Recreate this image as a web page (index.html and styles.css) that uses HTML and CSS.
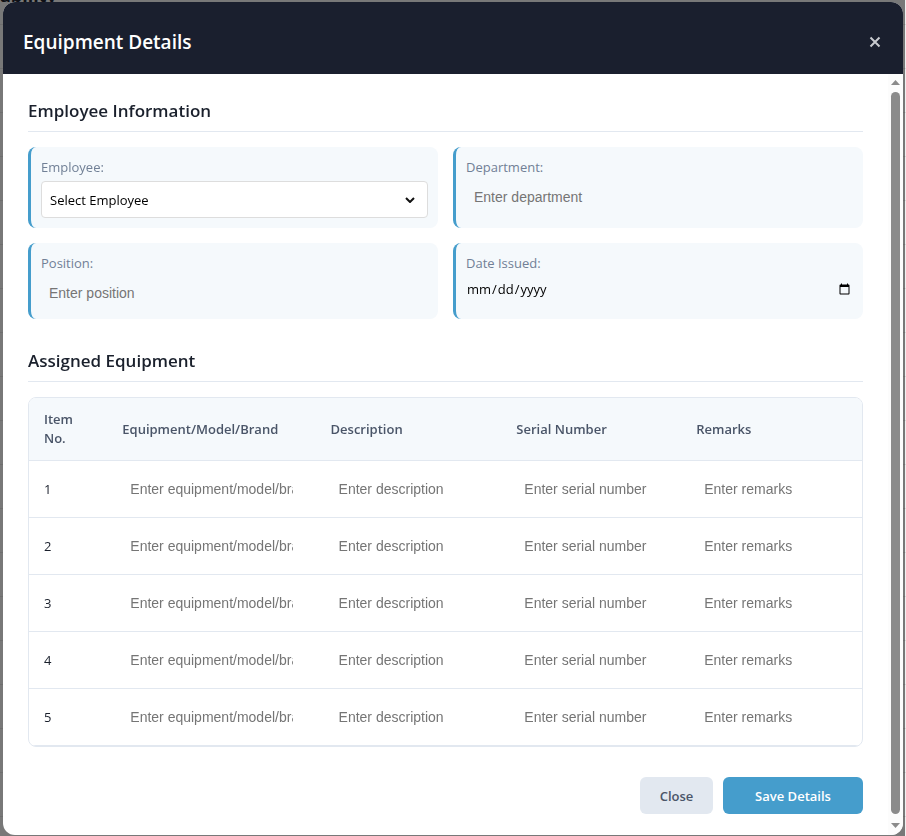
FILE: index.html
```html
<!DOCTYPE html>
<html lang="en">
<head>
<meta charset="utf-8">
<title>Equipment Details</title>
<link rel="stylesheet" href="styles.css">
</head>
<body>
<div class="page"><p class="page-title">ability</p></div>
<div class="overlay">
  <div class="modal" role="dialog" aria-labelledby="modal-title">
    <header class="modal-header">
      <h2 id="modal-title">Equipment Details</h2>
      <button class="close-icon" type="button" aria-label="Close">
        <svg width="12" height="12" viewBox="0 0 12 12"><path d="M1.5 1.5 10.5 10.5M10.5 1.5 1.5 10.5"/></svg>
      </button>
    </header>
    <div class="modal-main">
      <form class="modal-body">
        <section>
          <h3>Employee Information</h3>
          <div class="info-grid">
            <div class="info-item">
              <label for="employee">Employee:</label>
              <div class="select-wrap">
                <select id="employee"><option>Select Employee</option></select>
                <svg width="10" height="6" viewBox="0 0 10 6"><path d="M1 1 5 5 9 1"/></svg>
              </div>
            </div>
            <div class="info-item">
              <label for="department">Department:</label>
              <input class="field" id="department" type="text" placeholder="Enter department">
            </div>
            <div class="info-item">
              <label for="position">Position:</label>
              <input class="field" id="position" type="text" placeholder="Enter position">
            </div>
            <div class="info-item">
              <label for="issued">Date Issued:</label>
              <input class="date" id="issued" type="date">
            </div>
          </div>
        </section>
        <section>
          <h3>Assigned Equipment</h3>
          <div class="table-wrap">
            <table>
              <colgroup><col class="c-item"><col class="c-equipment"><col class="c-description"><col class="c-serial"><col></colgroup>
              <thead>
                <tr><th>Item No.</th><th>Equipment/Model/Brand</th><th>Description</th><th>Serial Number</th><th>Remarks</th></tr>
              </thead>
              <tbody>
                <tr><td>1</td><td><input class="field" type="text" aria-label="Equipment 1" placeholder="Enter equipment/model/brand"></td><td><input class="field" type="text" aria-label="Description 1" placeholder="Enter description"></td><td><input class="field" type="text" aria-label="Serial number 1" placeholder="Enter serial number"></td><td><input class="field" type="text" aria-label="Remarks 1" placeholder="Enter remarks"></td></tr>
                <tr><td>2</td><td><input class="field" type="text" aria-label="Equipment 2" placeholder="Enter equipment/model/brand"></td><td><input class="field" type="text" aria-label="Description 2" placeholder="Enter description"></td><td><input class="field" type="text" aria-label="Serial number 2" placeholder="Enter serial number"></td><td><input class="field" type="text" aria-label="Remarks 2" placeholder="Enter remarks"></td></tr>
                <tr><td>3</td><td><input class="field" type="text" aria-label="Equipment 3" placeholder="Enter equipment/model/brand"></td><td><input class="field" type="text" aria-label="Description 3" placeholder="Enter description"></td><td><input class="field" type="text" aria-label="Serial number 3" placeholder="Enter serial number"></td><td><input class="field" type="text" aria-label="Remarks 3" placeholder="Enter remarks"></td></tr>
                <tr><td>4</td><td><input class="field" type="text" aria-label="Equipment 4" placeholder="Enter equipment/model/brand"></td><td><input class="field" type="text" aria-label="Description 4" placeholder="Enter description"></td><td><input class="field" type="text" aria-label="Serial number 4" placeholder="Enter serial number"></td><td><input class="field" type="text" aria-label="Remarks 4" placeholder="Enter remarks"></td></tr>
                <tr><td>5</td><td><input class="field" type="text" aria-label="Equipment 5" placeholder="Enter equipment/model/brand"></td><td><input class="field" type="text" aria-label="Description 5" placeholder="Enter description"></td><td><input class="field" type="text" aria-label="Serial number 5" placeholder="Enter serial number"></td><td><input class="field" type="text" aria-label="Remarks 5" placeholder="Enter remarks"></td></tr>
              </tbody>
            </table>
          </div>
        </section>
        <div class="actions">
          <button class="btn btn-close" type="button">Close</button>
          <button class="btn btn-save" type="submit">Save Details</button>
        </div>
      </form>
      <div class="scrollbar" aria-hidden="true">
        <svg width="9" height="5" viewBox="0 0 9 5"><path d="M4.5 0 9 5H0z"/></svg>
        <div class="thumb"></div>
        <svg width="9" height="5" viewBox="0 0 9 5"><path d="M0 0H9L4.5 5z"/></svg>
      </div>
    </div>
  </div>
</div>
</body>
</html>
```
FILE: styles.css
```css
* { box-sizing: border-box; }

body {
  margin: 0;
  height: 100vh;
  overflow: hidden;
  font-family: "Segoe UI", "Open Sans", "Noto Sans", sans-serif;
  color: #1a202c;
  background: #fff;
}

.page {
  height: 100%;
  overflow: hidden;
  background: repeating-linear-gradient(#f0f0f0 0 24px, #dcdcdc 24px 25px, #f0f0f0 25px 44px);
}

.page-title {
  margin: -17px 0 0;
  font-size: 18px;
  line-height: 24px;
  font-weight: 700;
}

.overlay {
  position: fixed;
  inset: 0 1px 0 0;
  display: flex;
  padding: 2px 2px 1px 3px;
  background: rgba(0, 0, 0, 0.5);
}

.modal {
  flex: 1;
  min-width: 0;
  display: flex;
  flex-direction: column;
  overflow: hidden;
  border-radius: 12px;
  background: #fff;
}

.modal-header {
  display: flex;
  flex: none;
  align-items: center;
  justify-content: space-between;
  min-height: 72px;
  padding: 24px 20px 16px;
  color: #fff;
  background: #1a1f2e;
}

h2, h3 { margin: 0; font-weight: 600; }

h2 { font-size: 19px; line-height: 28px; }

.close-icon {
  display: flex;
  padding: 2px;
  border: 0;
  background: none;
}

.close-icon svg { stroke: #c8cacf; stroke-width: 2; fill: none; }

.modal-main { display: flex; flex: 1; min-height: 0; }

.modal-body {
  flex: 1;
  min-width: 0;
  display: flex;
  flex-direction: column;
  gap: 30px;
  padding: 25px 25px 20px;
}

h3 {
  margin-bottom: 15px;
  padding-bottom: 8px;
  border-bottom: 1px solid #e2e8f0;
  font-size: 17px;
  line-height: 24px;
}

.info-grid {
  display: grid;
  grid-template-columns: 1fr 1fr;
  gap: 15px;
}

.info-item {
  display: flex;
  flex-direction: column;
  gap: 4px;
  padding: 10px;
  border-left: 3px solid #459dcc;
  border-radius: 8px;
  background: #f5f9fc;
}

label { font-size: 13px; line-height: 20px; color: #718096; }

.select-wrap { display: grid; align-items: center; }

.select-wrap > * { grid-area: 1 / 1; }

.select-wrap svg {
  justify-self: end;
  margin-right: 13px;
  fill: none;
  stroke: #111;
  stroke-width: 2;
  pointer-events: none;
}

select {
  appearance: none;
  width: 100%;
  height: 37px;
  padding: 8px;
  border: 1px solid #ddd;
  border-radius: 4px;
  background: #fff;
  font-family: inherit;
  font-size: 13px;
  color: #000;
}

.field {
  display: block;
  width: 100%;
  height: 32px;
  padding: 8px;
  border: 0;
  background: transparent;
  font-family: "Liberation Sans", Arial, sans-serif;
  font-size: 14px;
}

.field::placeholder { color: #757575; }

.date {
  height: 24px;
  padding: 0;
  border: 0;
  background: transparent;
  font-family: inherit;
  font-size: 13px;
  color: #000;
}

.table-wrap {
  overflow: hidden;
  border: 1px solid #e2e8f0;
  border-radius: 8px;
}

table {
  width: 100%;
  table-layout: fixed;
  border-collapse: separate;
  border-spacing: 0;
}

.c-item { width: 9.4%; }
.c-equipment { width: 25%; }
.c-description { width: 22.3%; }
.c-serial { width: 21.6%; }

th, td {
  padding: 12px 15px;
  border-bottom: 1px solid #e2e8f0;
  text-align: left;
  font-size: 13px;
}

th {
  line-height: 19px;
  font-weight: 600;
  color: #4a5568;
  background: #f5f9fc;
}

td { line-height: 20px; }

.actions { display: flex; justify-content: flex-end; gap: 10px; }

.btn {
  height: 37px;
  border: 0;
  border-radius: 6px;
  font-family: inherit;
  font-size: 13px;
  font-weight: 600;
}

.btn-close { width: 73px; color: #4a5568; background: #e2e8f0; }
.btn-save { width: 140px; color: #fff; background: #459dcc; }

.scrollbar {
  flex: none;
  display: flex;
  flex-direction: column;
  align-items: center;
  gap: 7px;
  width: 15px;
  padding: 6px 0 7px;
  background: #fcfcfc;
}

.scrollbar svg { display: block; flex: none; fill: #8b8b8b; }

.thumb { flex: 1; width: 9px; margin-bottom: 2px; border-radius: 5px; background: #8b8b8b; }
```
